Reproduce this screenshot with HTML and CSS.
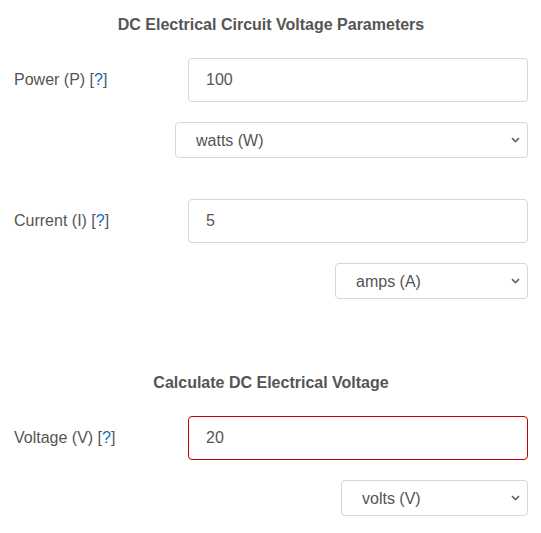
FILE: index.html
```html
<!DOCTYPE html>
<html lang="en">
<head>
    <meta charset="UTF-8">
    <meta name="viewport" content="width=device-width, initial-scale=1.0">
    <title>DC Voltage Calculator</title>
    <link rel="stylesheet" href="styles.css">
</head>
<body>
    <div class="calc">
        <h3 class="section-title">DC Electrical Circuit Voltage Parameters</h3>

        <div class="field-row first-row">
            <label class="field-label" for="power">Power (P) <span class="help">[<a href="#">?</a>]</span></label>
            <input type="text" id="power" class="input-box" value="100">
        </div>
        <div class="unit-row">
            <select class="unit-select unit-wide">
                <option>watts (W)</option>
            </select>
        </div>

        <div class="field-row gap-top">
            <label class="field-label" for="current">Current (I) <span class="help">[<a href="#">?</a>]</span></label>
            <input type="text" id="current" class="input-box" value="5">
        </div>
        <div class="unit-row">
            <select class="unit-select unit-amps">
                <option>amps (A)</option>
            </select>
        </div>

        <h3 class="section-title result-title">Calculate DC Electrical Voltage</h3>

        <div class="field-row first-row">
            <label class="field-label" for="voltage">Voltage (V) <span class="help">[<a href="#">?</a>]</span></label>
            <input type="text" id="voltage" class="input-box result-box" value="20" readonly>
        </div>
        <div class="unit-row">
            <select class="unit-select unit-volts">
                <option>volts (V)</option>
            </select>
        </div>
    </div>
</body>
</html>
```

FILE: styles.css
```css
body {
    margin: 0;
    background: #fff;
    color: #555;
    font-family: "Liberation Sans", Arial, sans-serif;
    font-size: 16px;
}
.calc {
    padding: 15px 13px 0 14px;
}
.section-title {
    margin: 0;
    font-size: 16px;
    line-height: 20px;
    font-weight: bold;
    text-align: center;
    color: #555;
}
.result-title {
    margin-top: 74px;
}
.field-row {
    display: flex;
    align-items: center;
    margin-top: 24px;
}
.field-row.first-row {
    margin-top: 23px;
}
.field-row.gap-top {
    margin-top: 41px;
}
.field-label {
    width: 174px;
    flex-shrink: 0;
}
.help a {
    color: #0b6cc7;
    text-decoration: none;
}
.input-box {
    flex: 1;
    box-sizing: border-box;
    height: 44px;
    padding: 0 17px;
    font-family: inherit;
    font-size: 16px;
    color: #555;
    border: 1px solid #d6d6d6;
    border-radius: 4px;
    background: #fff;
    outline: none;
}
.result-box {
    border-color: #c40000;
}
.unit-row {
    display: flex;
    justify-content: flex-end;
    margin-top: 20px;
}
.unit-select {
    box-sizing: border-box;
    height: 36px;
    padding: 0 30px 0 20px;
    font-family: inherit;
    font-size: 16px;
    color: #555;
    border: 1px solid #d6d6d6;
    border-radius: 4px;
    background-color: #fff;
    background-image: url("data:image/svg+xml,%3Csvg xmlns='http://www.w3.org/2000/svg' width='9' height='6' viewBox='0 0 9 6'%3E%3Cpath d='M1 1.2l3.5 3.3L8 1.2' fill='none' stroke='%23666' stroke-width='1.7'/%3E%3C/svg%3E");
    background-repeat: no-repeat;
    background-position: right 7px center;
    -webkit-appearance: none;
    appearance: none;
    outline: none;
}
.unit-wide { width: 353px; }
.unit-amps { width: 193px; }
.unit-volts { width: 187px; }
```
